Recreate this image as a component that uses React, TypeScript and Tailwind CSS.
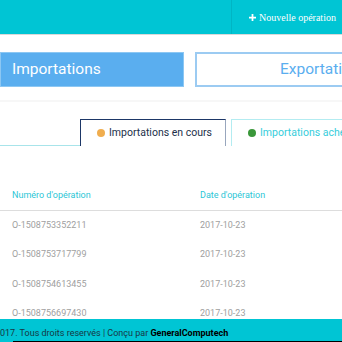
export default function App() {
    const rows = [
        ["O-1508753352211", "2017-10-23"],
        ["O-1508753717799", "2017-10-23"],
        ["O-1508754613455", "2017-10-23"],
        ["O-1508756697430", "2017-10-23"],
    ];

    return (
        <div className="relative w-[342px] h-[342px] overflow-hidden bg-white font-['Roboto',sans-serif]">
            {/* Top bar */}
            <header className="flex h-[35px] bg-[#00c5d4] border-b border-[#d9d9d9]">
                <div className="flex-1" />
                <div className="w-[111px] shrink-0 border-l border-[#00b5c4] flex items-center pl-[17px] gap-[3px] text-white font-['Liberation_Serif',serif] text-[10px] whitespace-nowrap">
                    <svg width="7" height="7" viewBox="0 0 8 8" className="shrink-0">
                        <path d="M3 0h2v3h3v2H5v3H3V5H0V3h3z" fill="#fff" />
                    </svg>
                    <span>Nouvelle opération</span>
                </div>
            </header>

            {/* Type switch */}
            <div className="flex h-[35px] mt-[17px]">
                <div className="w-[184px] shrink-0 bg-[#5aaeef] border border-[#8cc7f3] flex items-center pl-[11px] text-white text-[15.5px]">
                    Importations
                </div>
                <div className="w-[264px] shrink-0 ml-[11px] border-2 border-[#9ccbf2] flex items-center pl-[83px] text-[#5aaeef] text-[15.5px]">
                    Exportations
                </div>
            </div>
            <div className="mt-[13px] h-[2px] bg-[#f7f7f7]" />

            {/* Tabs */}
            <div className="flex h-[27px] mt-[17px] whitespace-nowrap">
                <div className="w-[80px] shrink-0 border-b border-[#a8e4ea]" />
                <div className="w-[146px] shrink-0 border-t border-l border-[#1d3767] border-r border-r-[#98a6bd] bg-white flex items-center pl-[16px] gap-[4px] text-[10.5px] text-[#22304a]">
                    <span className="w-[8px] h-[8px] rounded-full bg-[#f0ad4e]" />
                    Importations en cours
                </div>
                <div className="w-[140px] shrink-0 ml-[5px] border border-b-0 border-[#b3ecf1] flex items-center pl-[16px] gap-[4px] text-[10.5px] text-[#36cddb]">
                    <span className="w-[8px] h-[8px] rounded-full bg-[#3a973a]" />
                    Importations achevées
                </div>
            </div>

            {/* Table */}
            <div className="mt-[35px] text-[9px]">
                <div className="flex h-[30px] items-center border-b border-[#dddddd] text-[#2cc6d6]">
                    <div className="w-[200px] pl-[12px]">Numéro d'opération</div>
                    <div>Date d'opération</div>
                </div>
                {rows.map(([num, date]) => (
                    <div key={num} className="flex h-[29.4px] items-center text-[#a0a0a0]">
                        <div className="w-[200px] pl-[12px]">{num}</div>
                        <div>{date}</div>
                    </div>
                ))}
            </div>

            {/* Footer */}
            <footer className="absolute left-0 right-0 top-[319px] h-[30px] bg-[#00c5d4] flex items-center text-[9px] text-[#173845] whitespace-nowrap">
                <span>017. Tous droits reservés | Conçu par <b className="text-black">GeneralComputech</b></span>
            </footer>
            <div className="absolute left-[13px] right-0 bottom-0 h-[1px] bg-black" />
        </div>
    );
}
